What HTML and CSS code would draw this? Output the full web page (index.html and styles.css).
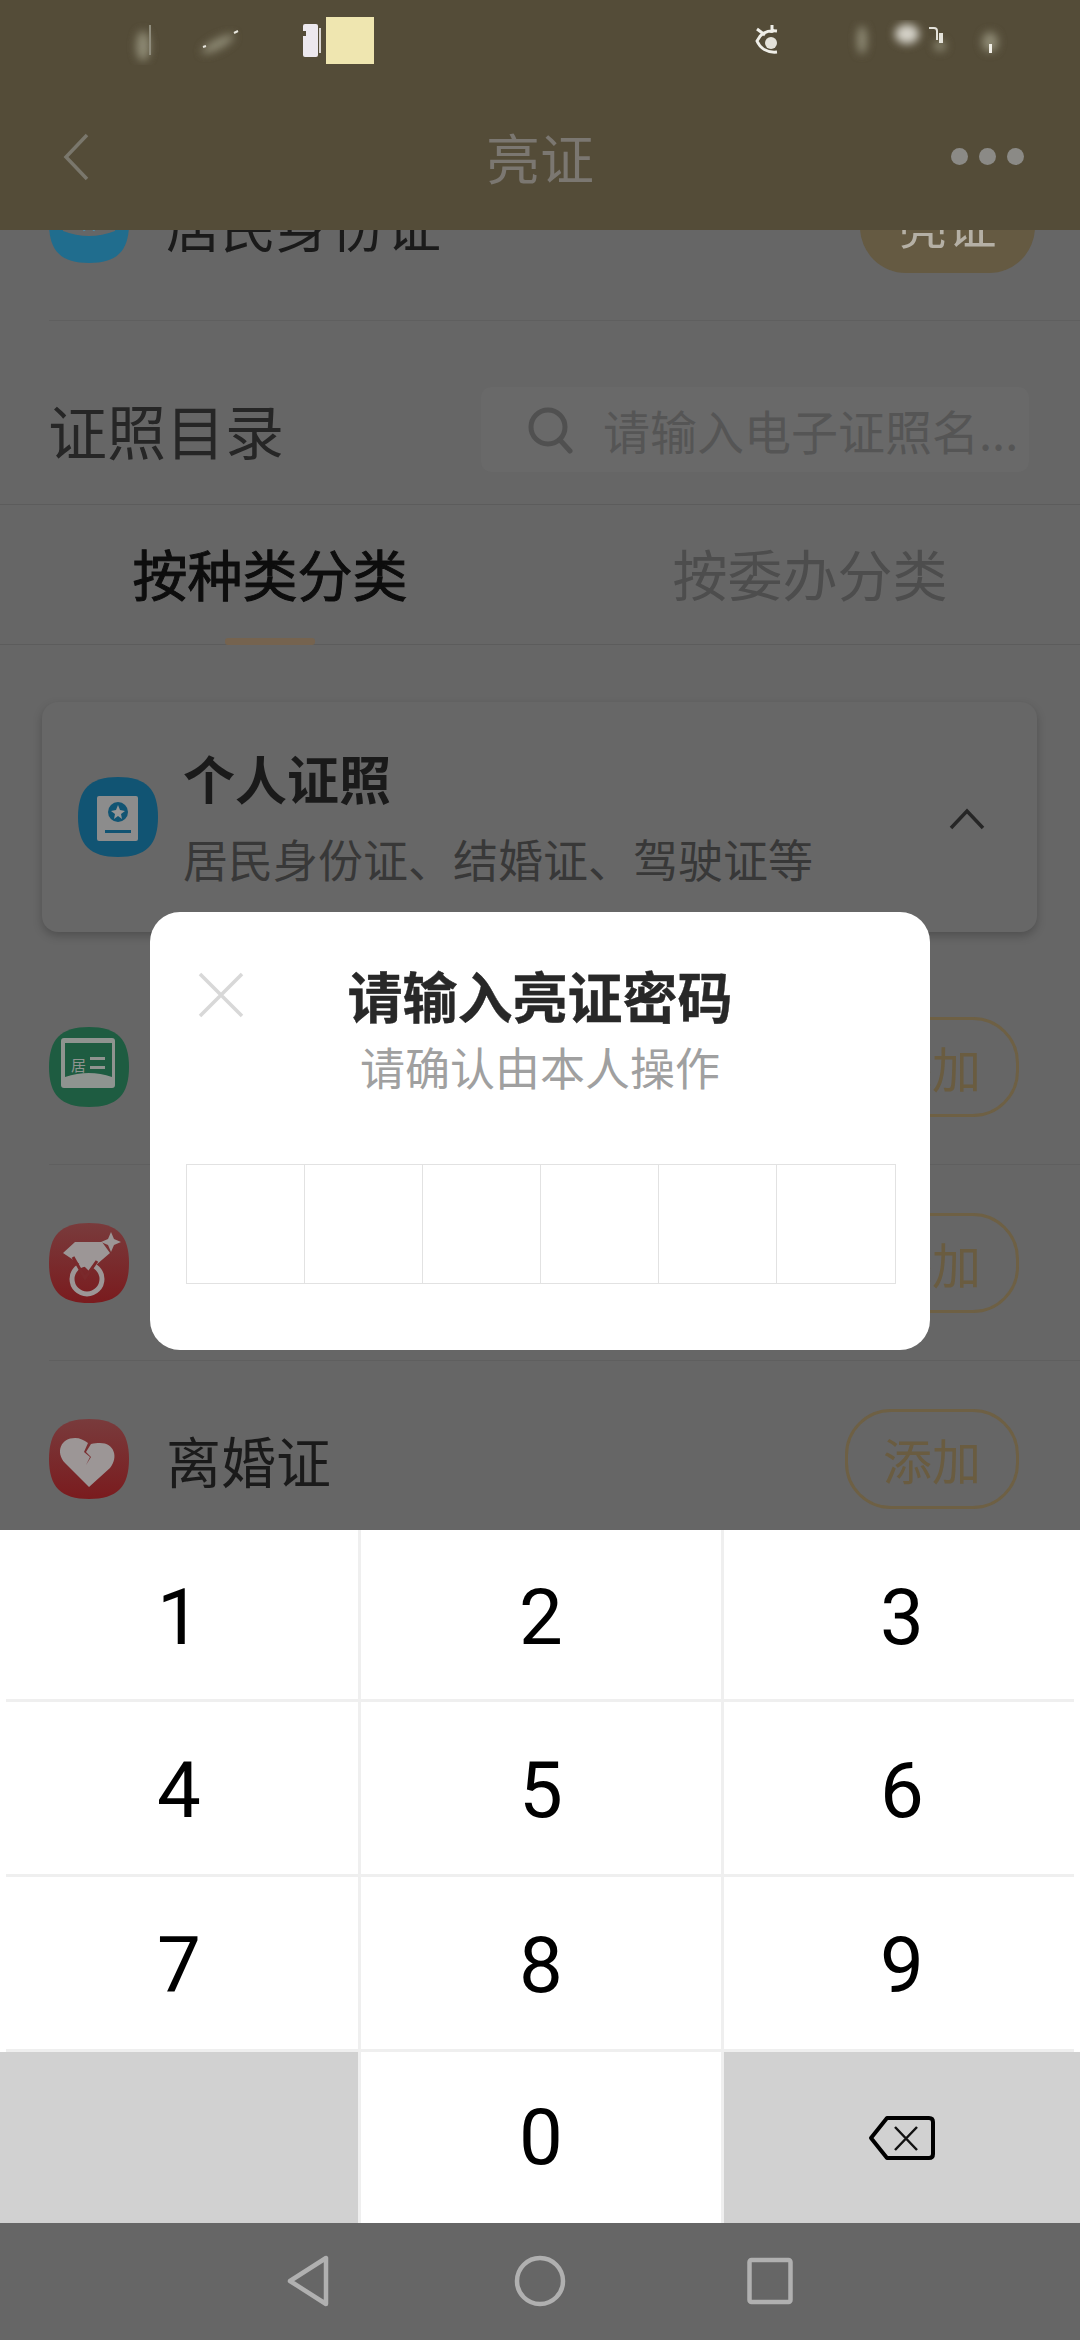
FILE: index.html
```html
<!DOCTYPE html>
<html>
<head>
  <meta charset="utf-8">
  <meta name="viewport" content="width=device-width">
  <title>亮证</title>
  <link rel="stylesheet" href="styles.css">
</head>
<body>
  <div class="page">
    <header class="header">
      <svg class="status" width="1080" height="80" viewBox="0 0 1080 80">
        <defs>
          <filter id="soft"><feGaussianBlur stdDeviation="4"/></filter>
        </defs>
        <g filter="url(#soft)" fill="#8e8a74">
          <ellipse cx="143" cy="46" rx="7" ry="15"/>
          <ellipse cx="218" cy="44" rx="18" ry="5" transform="rotate(-28 218 44)"/>
          <ellipse cx="862" cy="40" rx="5" ry="14"/>
          <ellipse cx="907" cy="34" rx="12" ry="10" fill="#d4d1c8"/>
          <ellipse cx="940" cy="46" rx="6" ry="5"/>
          <ellipse cx="990" cy="42" rx="8" ry="10"/>
        </g>
        <rect x="149" y="25" width="2" height="30" fill="#8f8c7c"/>
        <path d="M234 33l4-2M203 47l3-1" stroke="#e8e6de" stroke-width="2"/>
        <rect x="303" y="24" width="15" height="33" rx="2" fill="#ece8ee"/>
        <rect x="319" y="28" width="2" height="25" fill="#d8d4d0"/>
        <rect x="303" y="31" width="3" height="5" fill="#544c38"/>
        <rect x="326" y="17" width="48" height="47" fill="#efe6b0"/>
        <path d="M777 52c-10 1-17-4-20-11 3-7 10-11 20-10M757 29l8 6M772 25v8" fill="none" stroke="#efeee8" stroke-width="3"/>
        <circle cx="771" cy="43" r="6" fill="#e4e2da"/>
        <path d="M929 28h5q3 0 3 3v9" fill="none" stroke="#e4e2da" stroke-width="2"/>
        <rect x="939" y="33" width="4" height="10" fill="#e4e2da"/>
        <rect x="989" y="44" width="3" height="9" fill="#f0eee6"/>
      </svg>
      <div class="titlebar">
        <svg class="back" width="30" height="48" viewBox="0 0 30 48"><path d="M25 2L4 24l21 22" fill="none" stroke="#7a776c" stroke-width="3.5"/></svg>
        <div class="title">亮证</div>
        <div class="dots"><span></span><span></span><span></span></div>
      </div>
    </header>

    <div class="content">
      <div class="scroll">
        <div class="row">
          <svg class="icon" viewBox="0 0 80 80">
            <path fill="#206d8e" d="M40 0C68 0 80 12 80 40S68 80 40 80 0 68 0 40 12 0 40 0Z"/>
            <path d="M14 8h52v40q-26 10-52 0Z" fill="#666"/>
            <path d="M34 47l6-4 6 4" fill="none" stroke="#4f93b0" stroke-width="3"/>
          </svg>
          <div class="row-name">居民身份证</div>
          <div class="pill pill-solid">亮证</div>
        </div>

        <div class="catalog">
          <div class="catalog-title">证照目录</div>
          <div class="search">
            <svg width="46" height="48" viewBox="0 0 46 48"><circle cx="21" cy="21" r="17" fill="none" stroke="#505050" stroke-width="5"/><path d="M33 34l10 11" stroke="#505050" stroke-width="5" stroke-linecap="round"/></svg>
            <span>请输入电子证照名...</span>
          </div>
        </div>

        <div class="tabs">
          <div class="tab tab-on">按种类分类</div>
          <div class="tab">按委办分类</div>
        </div>

        <div class="card">
          <svg class="icon" viewBox="0 0 80 80">
            <path fill="#115473" d="M40 0C68 0 80 12 80 40S68 80 40 80 0 68 0 40 12 0 40 0Z"/>
            <rect x="19" y="19" width="41" height="45" rx="2" fill="#8c8c8c"/>
            <circle cx="40" cy="35" r="10" fill="#115473"/>
            <path d="M40 28l2 5 5 1-4 3 1 5-4-3-4 3 1-5-4-3 5-1Z" fill="#969696"/>
            <rect x="27" y="53" width="26" height="3" fill="#115473"/>
          </svg>
          <div class="card-text">
            <div class="card-title">个人证照</div>
            <div class="card-sub">居民身份证、结婚证、驾驶证等</div>
          </div>
          <svg class="chevron" width="36" height="22" viewBox="0 0 36 22"><path d="M2 20L18 3l16 17" fill="none" stroke="#262626" stroke-width="3.5"/></svg>
        </div>

        <div class="list">
          <div class="row">
            <svg class="icon" viewBox="0 0 80 80">
              <path fill="#1e5c41" d="M40 0C68 0 80 12 80 40S68 80 40 80 0 68 0 40 12 0 40 0Z"/>
              <rect x="12" y="11" width="54" height="50" rx="3" fill="#8f9490"/>
              <path d="M16 16h47v34q-23-8-47 0Z" fill="#1e5c41"/>
              <text x="22" y="44" class="icon-char">居</text>
              <rect x="41" y="30" width="15" height="3" fill="#8f9490"/>
              <rect x="41" y="39" width="15" height="3" fill="#8f9490"/>
            </svg>
            <div class="row-name">居住证</div>
            <div class="pill">添加</div>
          </div>
          <div class="row">
            <svg class="icon" viewBox="0 0 80 80">
              <defs><linearGradient id="red" x1="0" y1="0" x2="0" y2="1"><stop offset="0" stop-color="#793b3c"/><stop offset="1" stop-color="#7a1b1e"/></linearGradient></defs>
              <path fill="url(#red)" d="M40 0C68 0 80 12 80 40S68 80 40 80 0 68 0 40 12 0 40 0Z"/>
              <path d="M14 30l12-11h27l8 11-21 18-5-5-6-3Z" fill="#9c9696"/>
              <circle cx="38" cy="56" r="15" fill="none" stroke="#9c9696" stroke-width="5"/>
              <path d="M24 34l12 21 12-17" fill="none" stroke="#7a292b" stroke-width="3"/>
              <path d="M62 9l3 7 7 3-7 3-3 7-3-7-7-3 7-3Z" fill="#9c9696"/>
            </svg>
            <div class="row-name">结婚证</div>
            <div class="pill">添加</div>
          </div>
          <div class="row">
            <svg class="icon" viewBox="0 0 80 80">
              <path fill="url(#red)" d="M40 0C68 0 80 12 80 40S68 80 40 80 0 68 0 40 12 0 40 0Z"/>
              <path d="M40 68L16 44C6 33 12 19 26 19c5 0 9 2 13 5l-4 9 6 5-4 8 5-8-5-5 5-8c3-1 6-1 9-1 14 0 19 14 10 25Z" fill="#9c9696"/>
            </svg>
            <div class="row-name">离婚证</div>
            <div class="pill">添加</div>
          </div>
        </div>
      </div>
    </div>

    <div class="modal">
      <svg class="close" width="46" height="46" viewBox="0 0 46 46"><path d="M2 2l42 42M44 2L2 44" stroke="#d8d8d8" stroke-width="3.5"/></svg>
      <div class="modal-title">请输入亮证密码</div>
      <div class="modal-sub">请确认由本人操作</div>
      <div class="code">
        <div class="cell"></div><div class="cell"></div><div class="cell"></div>
        <div class="cell"></div><div class="cell"></div><div class="cell"></div>
      </div>
    </div>

    <div class="bottom">
      <div class="keys">
        <div class="key">1</div><div class="key">2</div><div class="key">3</div>
        <div class="key">4</div><div class="key">5</div><div class="key">6</div>
        <div class="key">7</div><div class="key">8</div><div class="key">9</div>
        <div class="key key-gray"></div>
        <div class="key key-zero">0</div>
        <div class="key key-gray">
          <svg width="68" height="46" viewBox="0 0 68 46"><path d="M19 3h42q4 0 4 4v32q0 4-4 4H19L3 23Z" fill="none" stroke="#000" stroke-width="4" stroke-linejoin="round"/><path d="M27 12l22 23M49 12L27 35" stroke="#111" stroke-width="2.5"/></svg>
        </div>
      </div>
      <nav class="navbar">
        <svg width="44" height="52" viewBox="0 0 44 52"><path d="M40 3v46L4 26Z" fill="none" stroke="#b0b0b0" stroke-width="4.5" stroke-linejoin="round"/></svg>
        <svg width="52" height="52" viewBox="0 0 52 52"><circle cx="26" cy="26" r="23" fill="none" stroke="#b0b0b0" stroke-width="4.5"/></svg>
        <svg width="46" height="48" viewBox="0 0 46 48"><rect x="2.5" y="3" width="41" height="42" rx="2" fill="none" stroke="#b0b0b0" stroke-width="4.5"/></svg>
      </nav>
    </div>
  </div>
</body>
</html>
```

FILE: styles.css
```css
* {
  box-sizing: border-box;
}
body {
  margin: 0;
  font-family: "Noto Sans CJK SC", "Noto Sans", sans-serif;
  background-color: #666;
}
.page {
  position: relative;
  width: 1080px;
  height: 2340px;
  overflow: hidden;
  display: flex;
  flex-direction: column;
}

/* header */
.header {
  height: 230px;
  flex: none;
  background-color: #544c38;
}
.status {
  display: block;
}
.titlebar {
  height: 150px;
  display: flex;
  align-items: center;
  justify-content: space-between;
  padding: 3px 56px 0 62px;
}
.title {
  font-size: 54px;
  line-height: 60px;
  color: #7b7771;
  margin-left: 37px;
}
.dots {
  display: flex;
  gap: 11px;
}
.dots span {
  width: 17px;
  height: 17px;
  border-radius: 50%;
  background-color: #8b8a86;
}

/* page behind the dialog */
.content {
  flex: 1;
  overflow: hidden;
}
.scroll {
  margin-top: -105px;
}
.row {
  height: 196px;
  display: flex;
  align-items: center;
  margin-left: 49px;
  padding-right: 61px;
  border-bottom: 1px solid #5f5f5f;
}
.icon {
  width: 80px;
  height: 80px;
  flex: none;
}
.icon-char {
  font-size: 15px;
  fill: #8f9490;
}
.row-name {
  flex: 1;
  margin-left: 37px;
  font-size: 55px;
  line-height: 60px;
  color: #1a1a1a;
}
.pill {
  width: 174px;
  height: 100px;
  border: 3px solid #6e6044;
  border-radius: 46px;
  display: flex;
  align-items: center;
  justify-content: center;
  font-size: 49px;
  color: #6a5c40;
}
.row:first-child .pill-solid {
  margin-right: -16px;
  width: 175px;
  background-color: #655a42;
  border: none;
  color: #b5b0a5;
}
.catalog {
  height: 184px;
  display: flex;
  align-items: center;
  justify-content: space-between;
  padding: 34px 51px 0 48px;
  border-bottom: 1px solid #5c5c5c;
}
.catalog-title {
  font-size: 59px;
  line-height: 64px;
  color: #262626;
}
.search {
  width: 548px;
  height: 85px;
  display: flex;
  align-items: center;
  gap: 30px;
  padding-left: 46px;
  border-radius: 10px;
  background-color: #696969;
  font-size: 47px;
  color: #555;
  white-space: nowrap;
}
.tabs {
  height: 140px;
  display: grid;
  grid-template-columns: 540px 540px;
  border-bottom: 1px solid #5c5c5c;
}
.tab {
  position: relative;
  text-align: center;
  padding-top: 32px;
  font-size: 55px;
  line-height: 70px;
  color: #4d4d4d;
}
.tab-on {
  color: #0d0d0d;
  -webkit-text-stroke: 1px #0d0d0d;
}
.tab-on::after {
  content: "";
  position: absolute;
  left: 225px;
  bottom: -1px;
  width: 90px;
  height: 7px;
  border-radius: 3px;
  background-color: #75634f;
}
.card {
  height: 230px;
  margin: 57px 43px 37px 42px;
  padding: 0 52px 0 36px;
  display: flex;
  align-items: center;
  border-radius: 16px;
  background-color: #676767;
  box-shadow: 0 4px 10px rgba(0, 0, 0, 0.22);
}
.card-text {
  flex: 1;
  margin-left: 25px;
  padding-top: 3px;
}
.card-title {
  font-size: 52px;
  line-height: 60px;
  font-weight: 700;
  color: #1a1a1a;
}
.card-sub {
  margin-top: 21px;
  font-size: 45px;
  line-height: 60px;
  color: #383838;
}
.chevron {
  display: block;
  margin-top: 4px;
}

/* dialog */
.modal {
  position: absolute;
  left: 150px;
  top: 912px;
  width: 780px;
  height: 438px;
  padding: 49px 36px 0;
  border-radius: 30px;
  background-color: #fff;
  text-align: center;
}
.close {
  position: absolute;
  left: 48px;
  top: 60px;
}
.modal-title {
  font-size: 55px;
  line-height: 66px;
  font-weight: 700;
  color: #282828;
  -webkit-text-stroke: 0.4px #282828;
}
.modal-sub {
  margin-top: 12px;
  font-size: 45px;
  line-height: 56px;
  color: #a0a0a0;
}
.code {
  margin-top: 69px;
  display: grid;
  grid-template-columns: repeat(6, 118px);
  height: 120px;
  border: 1px solid #e2e2e2;
  width: 710px;
}
.cell {
  border-right: 1px solid #e2e2e2;
}
.cell:last-child {
  border-right: none;
}

/* keyboard */
.bottom {
  position: absolute;
  left: 0;
  right: 0;
  bottom: 0;
}
.keys {
  position: relative;
  display: grid;
  grid-template-columns: 361px 363px 356px;
  grid-template-rows: 172px 175px 175px 171px;
  background-color: #fff;
}
/* the row lines stop short of the screen edges */
.keys::before,
.keys::after {
  content: "";
  position: absolute;
  top: 0;
  width: 6px;
  height: 522px;
  background-color: #fff;
}
.keys::before {
  left: 0;
}
.keys::after {
  right: 0;
}
.key {
  display: flex;
  align-items: center;
  justify-content: center;
  padding-top: 5px;
  font-family: Roboto, sans-serif;
  font-size: 78px;
  color: #000;
  border-right: 3px solid #efefef;
  border-bottom: 3px solid #efefef;
}
.key:nth-child(3n) {
  border-right: none;
}
.key:nth-last-child(-n+3) {
  border-bottom: none;
  padding-top: 0;
}
.key-gray {
  background-color: #d1d1d1;
}
.navbar {
  height: 117px;
  display: flex;
  align-items: center;
  background-color: #666;
  padding: 0 0 1px 286px;
  gap: 184px;
}
.navbar svg:last-child {
  margin-left: -3px;
}
```
